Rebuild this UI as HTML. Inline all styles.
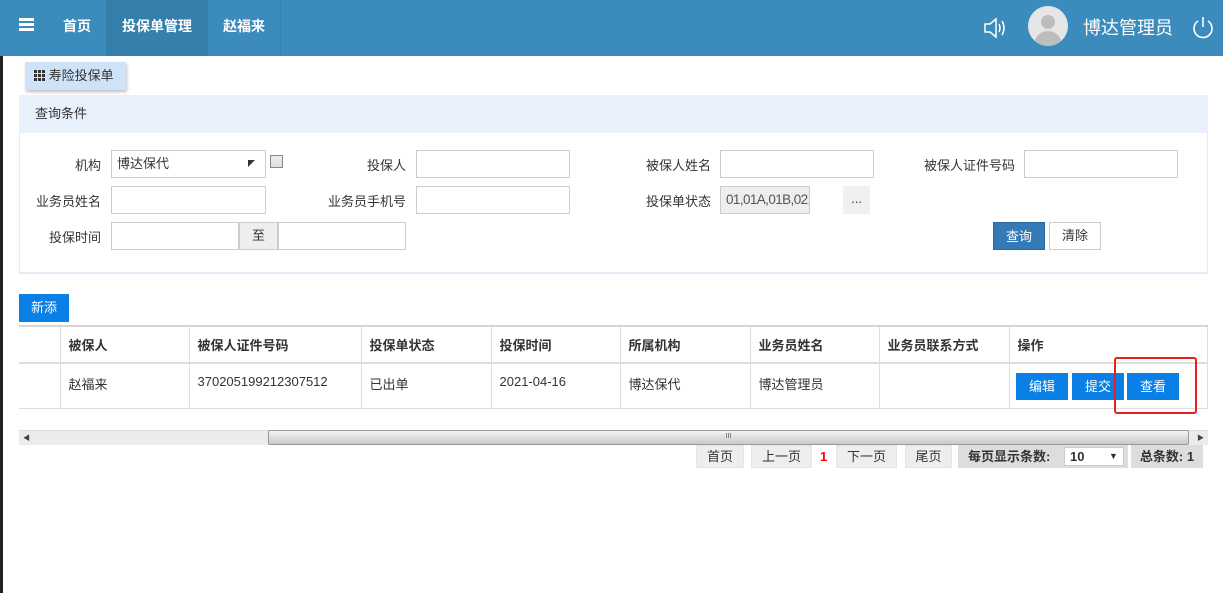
<!DOCTYPE html>
<html><head><meta charset="utf-8"><style>
*{margin:0;padding:0;box-sizing:border-box}
body{width:1223px;height:593px;overflow:hidden;background:#fff;font-family:"Liberation Sans","Noto Sans CJK SC",sans-serif;font-size:13px;color:#333;position:relative}
.a{position:absolute}
.hdr{left:0;top:0;width:1223px;height:56px;background:#3b8cbc}
.nav{top:0;height:56px;line-height:52px;color:#fff;font-weight:bold;font-size:14px;text-align:center;border-right:1px solid #3580ae}
.inp{background:#fff;border:1px solid #ccc;height:28px}
.lbl{text-align:right;line-height:28px;font-size:13px;color:#333}
.btn{color:#fff;text-align:center;line-height:27px;font-size:13px}
td,th{border-right:1px solid #ddd;text-align:left;padding-left:8px;font-size:13px}
</style></head><body>
<div class="a hdr"></div>
<div class="a" style="left:107px;top:0;width:101px;height:56px;background:#357fad"></div>
<div class="a" style="left:19px;top:18px;width:15px;height:3px;background:#fff;box-shadow:0 5px 0 #fff,0 10px 0 #fff"></div>
<div class="a nav" style="left:48px;width:59px">首页</div>
<div class="a nav" style="left:107px;width:101px">投保单管理</div>
<div class="a nav" style="left:208px;width:73px">赵福来</div>
<svg class="a" style="left:983px;top:17px" width="26" height="22" viewBox="0 0 26 22"><path d="M2 7h5l6-5v18l-6-5H2z" fill="none" stroke="#fff" stroke-width="1.5"/><path d="M16 7q2 4 0 8M19 4q4 7 0 14" fill="none" stroke="#fff" stroke-width="1.5"/></svg>
<div class="a" style="left:1028px;top:6px;width:40px;height:40px;border-radius:50%;background:#e6e6e6;overflow:hidden"><div class="a" style="left:13px;top:9px;width:14px;height:14px;border-radius:50%;background:#bdbdbd"></div><div class="a" style="left:6px;top:25px;width:28px;height:20px;border-radius:14px 14px 0 0;background:#bdbdbd"></div></div>
<div class="a" style="left:1083px;top:14px;color:#fff;font-size:18px">博达管理员</div>
<svg class="a" style="left:1190px;top:15px" width="26" height="26" viewBox="0 0 26 26"><path d="M8 6a9 9 0 1 0 10 0" fill="none" stroke="#fff" stroke-width="1.6"/><path d="M13 2v10" stroke="#fff" stroke-width="1.6"/></svg>
<div class="a" style="left:0;top:56px;width:3px;height:537px;background:#1f2328"></div>
<div class="a" style="left:25px;top:62px;width:101px;height:28px;background:#cfe3f8;box-shadow:1px 2px 3px rgba(0,0,0,.25);line-height:28px;padding-left:9px;font-size:13px"><span style="display:inline-block;width:11px;height:11px;vertical-align:-1px;background:linear-gradient(90deg,#333 3px,transparent 3px,transparent 4px,#333 4px,#333 7px,transparent 7px,transparent 8px,#333 8px);-webkit-mask:linear-gradient(#000 3px,transparent 3px,transparent 4px,#000 4px,#000 7px,transparent 7px,transparent 8px,#000 8px)"></span> 寿险投保单</div>
<div class="a" style="left:19px;top:95px;width:1189px;height:179px;border:1px solid #e3edf7;border-bottom:2px solid #e3edf7"></div>
<div class="a" style="left:19px;top:95px;width:1189px;height:38px;background:#e8f1fb;line-height:38px;padding-left:16px">查询条件</div>
<div class="a lbl" style="left:40px;top:152px;width:61px">机构</div>
<div class="a inp" style="left:111px;top:150px;width:155px;padding-left:5px;line-height:26px">博达保代<span class="a" style="left:136px;top:1px;font-size:7px">◤</span></div>
<div class="a" style="left:270px;top:155px;width:13px;height:13px;border:1px solid #888;background:linear-gradient(#eee,#ddd)"></div>
<div class="a lbl" style="left:300px;top:152px;width:106px">投保人</div>
<div class="a inp" style="left:416px;top:150px;width:154px"></div>
<div class="a lbl" style="left:600px;top:152px;width:111px">被保人姓名</div>
<div class="a inp" style="left:720px;top:150px;width:154px"></div>
<div class="a lbl" style="left:880px;top:152px;width:135px">被保人证件号码</div>
<div class="a inp" style="left:1024px;top:150px;width:154px"></div>
<div class="a lbl" style="left:20px;top:188px;width:81px">业务员姓名</div>
<div class="a inp" style="left:111px;top:186px;width:155px"></div>
<div class="a lbl" style="left:300px;top:188px;width:106px">业务员手机号</div>
<div class="a inp" style="left:416px;top:186px;width:154px"></div>
<div class="a lbl" style="left:600px;top:188px;width:111px">投保单状态</div>
<div class="a inp" style="left:720px;top:186px;width:90px;background:#eee;padding-left:5px;line-height:26px;color:#555;white-space:nowrap;overflow:hidden;font-size:13.5px;letter-spacing:-0.6px">01,01A,01B,02,02</div>
<div class="a" style="left:843px;top:186px;width:27px;height:28px;background:#f0f0f0;text-align:center;line-height:26px">...</div>
<div class="a lbl" style="left:20px;top:224px;width:81px">投保时间</div>
<div class="a inp" style="left:111px;top:222px;width:128px"></div>
<div class="a inp" style="left:239px;top:222px;width:39px;background:#eee;text-align:center;line-height:26px">至</div>
<div class="a inp" style="left:278px;top:222px;width:128px"></div>
<div class="a btn" style="left:993px;top:222px;width:52px;height:28px;background:#337ab7;border:1px solid #2e6da4">查询</div>
<div class="a" style="left:1049px;top:222px;width:52px;height:28px;border:1px solid #ccc;text-align:center;line-height:26px">清除</div>
<div class="a btn" style="left:19px;top:294px;width:50px;height:28px;background:#0a7fe6">新添</div>
<table class="a" style="left:19px;top:325px;width:1189px;border-collapse:collapse;border-top:2px solid #d6d6d6;border-bottom:1px solid #ddd">
<tr style="height:37px;border-bottom:2px solid #ddd;font-weight:bold"><th style="width:41px"></th><th style="width:129px">被保人</th><th style="width:172px">被保人证件号码</th><th style="width:130px">投保单状态</th><th style="width:129px">投保时间</th><th style="width:130px">所属机构</th><th style="width:129px">业务员姓名</th><th style="width:130px">业务员联系方式</th><th style="border-right:1px solid #ddd">操作</th></tr>
<tr style="height:45px;vertical-align:top"><td style="padding-top:10px"></td><td style="padding-top:10px">赵福来</td><td style="padding-top:10px">370205199212307512</td><td style="padding-top:10px">已出单</td><td style="padding-top:10px">2021-04-16</td><td style="padding-top:10px">博达保代</td><td style="padding-top:10px">博达管理员</td><td></td><td style="border-right:1px solid #ddd"></td></tr>
</table>
<div class="a btn" style="left:1016px;top:373px;width:52px;height:27px;background:#0a7fe6">编辑</div>
<div class="a btn" style="left:1072px;top:373px;width:52px;height:27px;background:#0a7fe6">提交</div>
<div class="a btn" style="left:1127px;top:373px;width:52px;height:27px;background:#0a7fe6">查看</div>
<div class="a" style="left:1114px;top:357px;width:83px;height:57px;border:2px solid #e8201c;border-radius:3px"></div>
<div class="a" style="left:19px;top:430px;width:1189px;height:15px;background:#ececec;border-top:1px solid #ddd"></div>
<div class="a" style="left:23px;top:433px;font-size:7px;color:#444">◀</div>
<div class="a" style="left:268px;top:430px;width:921px;height:15px;background:linear-gradient(#f4f4f4,#c9c9c9);border:1px solid #999;border-radius:2px;text-align:center;font-size:7px;line-height:11px;color:#555">III</div>
<div class="a" style="left:1197px;top:433px;font-size:7px;color:#444">▶</div>
<div class="a" style="left:696px;top:445px;width:48px;height:23px;background:#eee;border:1px solid #e4e4e4;text-align:center;line-height:21px">首页</div>
<div class="a" style="left:751px;top:445px;width:61px;height:23px;background:#eee;border:1px solid #e4e4e4;text-align:center;line-height:21px">上一页</div>
<div class="a" style="left:820px;top:445px;color:#f00;font-weight:bold;line-height:23px">1</div>
<div class="a" style="left:836px;top:445px;width:61px;height:23px;background:#eee;border:1px solid #e4e4e4;text-align:center;line-height:21px">下一页</div>
<div class="a" style="left:905px;top:445px;width:47px;height:23px;background:#eee;border:1px solid #e4e4e4;text-align:center;line-height:21px">尾页</div>
<div class="a" style="left:958px;top:445px;width:170px;height:23px;background:#ddd;font-weight:bold;line-height:23px;padding-left:10px">每页显示条数:</div>
<div class="a" style="left:1064px;top:447px;width:60px;height:19px;background:#fff;border:1px solid #ccc;font-weight:bold;line-height:17px;padding-left:5px">10<span class="a" style="left:44px;top:0;font-size:9px">▼</span></div>
<div class="a" style="left:1131px;top:445px;width:72px;height:23px;background:#ddd;font-weight:bold;line-height:23px;text-align:center">总条数: 1</div>
</body></html>
